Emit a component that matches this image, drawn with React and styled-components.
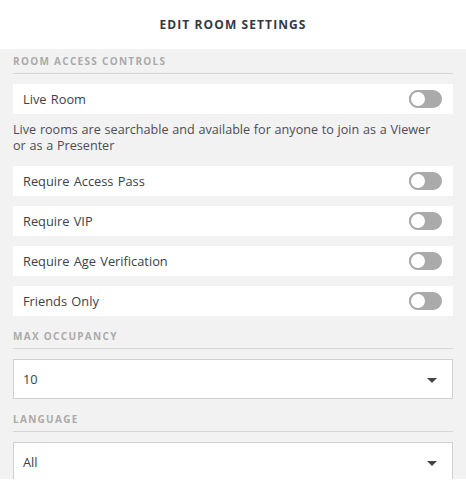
import styled, { createGlobalStyle } from 'styled-components';

const GlobalStyle = createGlobalStyle`
  html, body {
    margin: 0;
    padding: 0;
    background: #fff;
  }
  body {
    font-family: "Open Sans", Lato, sans-serif;
  }
`;

const Panel = styled.div`
  width: 466px;
  height: 491px;
  display: flex;
  flex-direction: column;
  background: #fff;
  overflow: hidden;
`;

const Header = styled.div`
  height: 49px;
  flex-shrink: 0;
  display: flex;
  align-items: center;
  justify-content: center;
  font-size: 12px;
  font-weight: 700;
  letter-spacing: 1.1px;
  color: #333944;
`;

const Body = styled.div`
  height: 430px;
  flex-shrink: 0;
  background: #f2f2f2;
  padding: 0 13px;
  overflow: hidden;
`;

const SectionTitle = styled.div`
  height: 25px;
  margin-top: ${p => p.first ? 0 : 8}px;
  display: flex;
  align-items: center;
  box-sizing: border-box;
  border-bottom: 1px solid #d6d6d6;
  font-size: 10px;
  font-weight: 700;
  letter-spacing: 1.3px;
  color: #aaa;
`;

const Rows = styled.div`
  display: flex;
  flex-direction: column;
  gap: 10px;
  margin-top: 10px;
`;

const Row = styled.div`
  height: 30px;
  background: #fff;
  display: flex;
  align-items: center;
  justify-content: space-between;
  padding: 0 11px 0 10px;
  font-size: 12.8px;
  word-spacing: 1px;
  color: #3a3f4a;
`;

const Toggle = styled.div`
  position: relative;
  width: 33px;
  height: 18px;
  border-radius: 9px;
  background: #aaa;
`;

const Knob = styled.div`
  position: absolute;
  left: 0;
  top: 0;
  width: 14px;
  height: 14px;
  border-radius: 50%;
  background: #fff;
  border: 2px solid #aaa;
`;

const Note = styled.p`
  margin: 8px 0 12px;
  padding-right: 14px;
  font-size: 12.6px;
  line-height: 16px;
  word-spacing: 0.5px;
  color: #4a4d55;
`;

const Select = styled.div`
  margin-top: 10px;
  height: 40px;
  box-sizing: border-box;
  background: #fff;
  border: 1px solid #d0d0d0;
  display: flex;
  align-items: center;
  justify-content: space-between;
  padding: 0 15px 0 9px;
  font-size: 12.8px;
  color: #3a3f4a;
`;

const Caret = styled.span`
  width: 0;
  height: 0;
  border-left: 5.5px solid transparent;
  border-right: 5.5px solid transparent;
  border-top: 5px solid #444;
  margin-top: 2px;
`;

const Switch = () => (
  <Toggle>
    <Knob />
  </Toggle>
);

const SettingRow = ({ label }) => (
  <Row>
    <span>{label}</span>
    <Switch />
  </Row>
);

export default function App() {
  return (
    <Panel>
      <GlobalStyle />
      <Header>EDIT ROOM SETTINGS</Header>
      <Body>
        <SectionTitle first>ROOM ACCESS CONTROLS</SectionTitle>
        <Rows>
          <SettingRow label="Live Room" />
        </Rows>
        <Note>Live rooms are searchable and available for anyone to join as a Viewer or as a Presenter</Note>
        <Rows>
          <SettingRow label="Require Access Pass" />
          <SettingRow label="Require VIP" />
          <SettingRow label="Require Age Verification" />
          <SettingRow label="Friends Only" />
        </Rows>
        <SectionTitle>MAX OCCUPANCY</SectionTitle>
        <Select>
          <span>10</span>
          <Caret />
        </Select>
        <SectionTitle>LANGUAGE</SectionTitle>
        <Select>
          <span>All</span>
          <Caret />
        </Select>
      </Body>
    </Panel>
  );
}
